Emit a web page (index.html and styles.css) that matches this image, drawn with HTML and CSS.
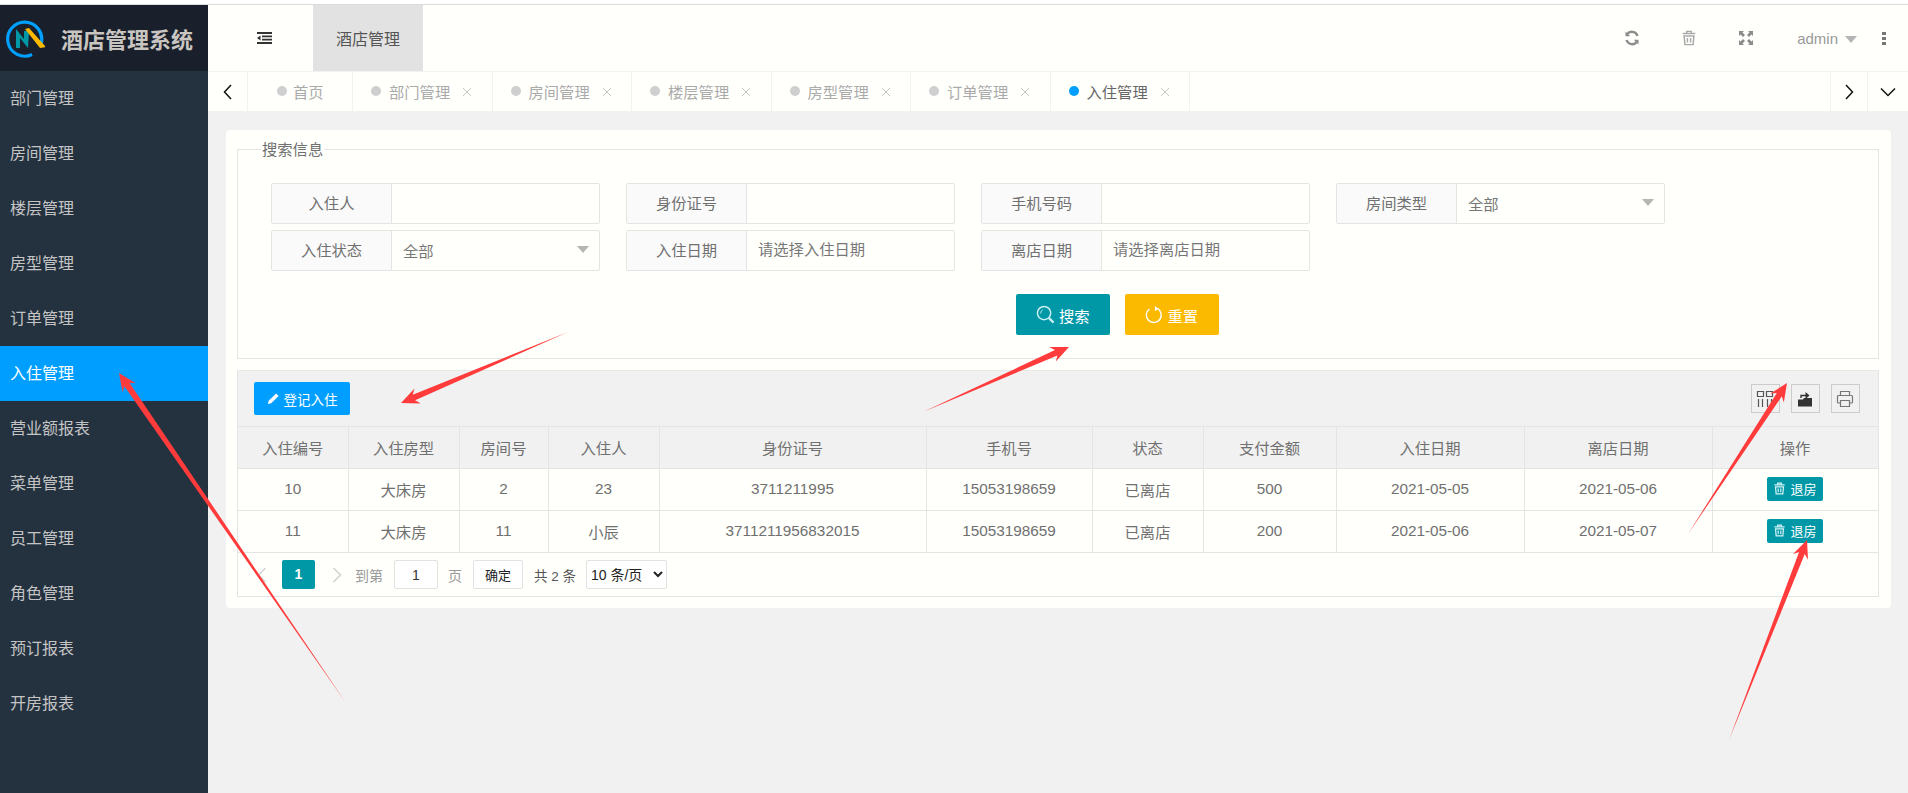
FILE: index.html
```html
<!DOCTYPE html>
<html lang="zh-CN">
<head>
  <meta charset="UTF-8">
  <title>酒店管理系统</title>
  <link rel="stylesheet" href="styles.css">
</head>
<body>
  <svg class="sprite" xmlns="http://www.w3.org/2000/svg">
    <symbol id="i-x" viewBox="0 0 10 10"><path d="M1 1l8 8M9 1l-8 8" fill="none" stroke="currentColor"/></symbol>
    <symbol id="i-trash" viewBox="0 0 14 14"><path d="M5 2.500V1.200h4v1.300M1.500 3h11M2.700 5.200h8.600l-.7 7.600H3.400zM5.600 7v4M8.400 7v4" fill="none" stroke="currentColor" stroke-width="1.300"/></symbol>
  </svg>

  <div class="top-line"></div>
  <div class="app">
    <aside class="sidebar">
      <div class="logo">
        <svg class="logo-mark" viewBox="0 0 40 40">
          <path d="M27 36.500A17 17 0 1 1 36 26" fill="none" stroke="#00a0ff" stroke-width="3.200"/>
          <path d="M11 30V11l8 10V13l5 0-1 17-8-10v10z" fill="#0097a7"/>
          <path d="M20 11l4-1 17 19-6 1z" fill="#fbb900"/>
        </svg>
        <span>酒店管理系统</span>
      </div>
      <ul class="menu">
        <li>部门管理</li>
        <li>房间管理</li>
        <li>楼层管理</li>
        <li>房型管理</li>
        <li>订单管理</li>
        <li class="active">入住管理</li>
        <li>营业额报表</li>
        <li>菜单管理</li>
        <li>员工管理</li>
        <li>角色管理</li>
        <li>预订报表</li>
        <li>开房报表</li>
      </ul>
    </aside>

    <div class="main">
      <header class="topbar">
        <div class="shrink">
          <svg viewBox="0 0 15 12" width="15" height="12"><path d="M0 1h15M5 4.300h10M5 7.700h10M0 11h15" fill="none" stroke="#333" stroke-width="1.800"/><path d="M3.500 3.500v5L0 6z" fill="#333"/></svg>
        </div>
        <div class="top-tab">酒店管理</div>
        <div class="top-right">
          <svg class="top-icon" viewBox="0 0 16 16"><path d="M13.500 6A6 6 0 0 0 3 4.200M2.500 10A6 6 0 0 0 13 11.800" fill="none" stroke="#8c8c8c" stroke-width="2.400"/><path d="M1.500 1.500v4.700h4.700zM14.500 14.500V9.800H9.800z" fill="#8c8c8c"/></svg>
          <svg class="top-icon trash"><use href="#i-trash"/></svg>
          <svg class="top-icon" viewBox="0 0 16 16"><path d="M1 1h5L4.500 2.500 7 5 5 7 2.500 4.500 1 6zM15 1v5l-1.500-1.500L11 7 9 5l2.500-2.500L10 1zM1 15v-5l1.500 1.500L5 9l2 2-2.500 2.500L6 15zM15 15h-5l1.500-1.500L9 11l2-2 2.500 2.500L15 10z" fill="#8c8c8c"/></svg>
          <span class="admin">admin<i class="caret"></i></span>
          <span class="dots"><i></i><i></i><i></i></span>
        </div>
      </header>

      <nav class="tabs">
        <div class="tab-btn">
          <svg viewBox="0 0 10 16" width="10" height="16"><path d="M8 1L1.500 8 8 15" fill="none" stroke="#111" stroke-width="1.500"/></svg>
        </div>
        <div class="tab home"><i class="dot"></i>首页</div>
        <div class="tab"><i class="dot"></i>部门管理<svg class="tab-x"><use href="#i-x"/></svg></div>
        <div class="tab"><i class="dot"></i>房间管理<svg class="tab-x"><use href="#i-x"/></svg></div>
        <div class="tab"><i class="dot"></i>楼层管理<svg class="tab-x"><use href="#i-x"/></svg></div>
        <div class="tab"><i class="dot"></i>房型管理<svg class="tab-x"><use href="#i-x"/></svg></div>
        <div class="tab"><i class="dot"></i>订单管理<svg class="tab-x"><use href="#i-x"/></svg></div>
        <div class="tab current"><i class="dot"></i>入住管理<svg class="tab-x"><use href="#i-x"/></svg></div>
        <div class="tab-btn right">
          <svg viewBox="0 0 10 16" width="10" height="16"><path d="M2 1l6.500 7L2 15" fill="none" stroke="#111" stroke-width="1.500"/></svg>
        </div>
        <div class="tab-btn down">
          <svg viewBox="0 0 16 10" width="16" height="10"><path d="M1 1.500L8 8.500l7-7" fill="none" stroke="#111" stroke-width="1.500"/></svg>
        </div>
      </nav>

      <div class="content">
        <div class="card">
          <fieldset class="search">
            <legend>搜索信息</legend>
            <div class="form-grid">
              <div class="field"><label>入住人</label><input type="text"></div>
              <div class="field"><label>身份证号</label><input type="text"></div>
              <div class="field"><label>手机号码</label><input type="text"></div>
              <div class="field"><label>房间类型</label><div class="fake-select">全部<i class="caret"></i></div></div>
              <div class="field"><label>入住状态</label><div class="fake-select">全部<i class="caret"></i></div></div>
              <div class="field"><label>入住日期</label><input type="text" placeholder="请选择入住日期"></div>
              <div class="field"><label>离店日期</label><input type="text" placeholder="请选择离店日期"></div>
            </div>
            <div class="search-btns">
              <button class="btn teal">
                <svg viewBox="0 0 20 20" width="19" height="19"><circle cx="8.500" cy="8.500" r="7" fill="none" stroke="#c8f0f2" stroke-width="1.500"/><path d="M13.500 13.500l5 5" stroke="#c8f0f2" stroke-width="2.400"/><path d="M5 9c0-2 .8-3.200 2-4" fill="none" stroke="#c8f0f2"/></svg>搜索
              </button>
              <button class="btn yellow">
                <svg viewBox="0 0 20 20" width="18" height="18"><path d="M13.500 2.700A8.300 8.300 0 1 1 5 3.300" fill="none" stroke="#fff" stroke-width="1.600"/><path d="M11 0l4 3-4 2.500z" fill="#fff"/></svg>重置
              </button>
            </div>
          </fieldset>

          <div class="table-box">
            <div class="toolbar">
              <button class="add-btn">
                <svg viewBox="0 0 14 14" width="13" height="13"><path d="M1 13l.8-3.500L9.800 1.500l2.700 2.700-8 8z" fill="#fff"/></svg>登记入住
              </button>
              <div class="tools">
                <span class="tool"><svg viewBox="0 0 18 18" width="18" height="18"><path d="M1.500 1.500h6v5h-6zM10.500 1.500h6v5h-6zM2.500 9v8M6.500 9v8M11.500 9v8M15.500 9v8" fill="none" stroke="#555" stroke-width="1.200"/></svg></span>
                <span class="tool"><svg viewBox="0 0 18 18" width="18" height="18"><path d="M2 9.500h5l1-1.500h8v8.500H2z" fill="#333"/><path d="M5 8V5.500h5" fill="none" stroke="#333" stroke-width="1.400"/><path d="M9.500 2l4 3.500-4 3.500z" fill="#333"/></svg></span>
                <span class="tool print"><svg viewBox="0 0 18 18" width="18" height="18"><path d="M4.500 5V1.500h9V5M4.500 13H2.500a1 1 0 0 1-1-1V6.500a1 1 0 0 1 1-1h13a1 1 0 0 1 1 1V12a1 1 0 0 1-1 1h-2M4.500 10.500h9v6h-9z" fill="none" stroke="#777" stroke-width="1.200"/></svg></span>
              </div>
            </div>
            <table class="data">
              <colgroup>
                <col class="c-first"><col class="c-s"><col class="c-room"><col class="c-s">
                <col class="c-id"><col class="c-phone"><col class="c-s"><col class="c-pay">
                <col class="c-date"><col class="c-date"><col>
              </colgroup>
              <thead>
                <tr><th>入住编号</th><th>入住房型</th><th>房间号</th><th>入住人</th><th>身份证号</th><th>手机号</th><th>状态</th><th>支付金额</th><th>入住日期</th><th>离店日期</th><th>操作</th></tr>
              </thead>
              <tbody>
                <tr>
                  <td>10</td><td>大床房</td><td>2</td><td>23</td><td>3711211995</td><td>15053198659</td><td>已离店</td><td>500</td><td>2021-05-05</td><td>2021-05-06</td>
                  <td><button class="out-btn"><svg><use href="#i-trash"/></svg>退房</button></td>
                </tr>
                <tr>
                  <td>11</td><td>大床房</td><td>11</td><td>小辰</td><td>3711211956832015</td><td>15053198659</td><td>已离店</td><td>200</td><td>2021-05-06</td><td>2021-05-07</td>
                  <td><button class="out-btn"><svg><use href="#i-trash"/></svg>退房</button></td>
                </tr>
              </tbody>
            </table>
            <div class="pager">
              <svg class="chev" viewBox="0 0 10 16" width="10" height="16"><path d="M8.500 1L1.500 8l7 7" fill="none" stroke="#d2d2d2" stroke-width="1.500"/></svg>
              <span class="page-no">1</span>
              <svg class="chev" viewBox="0 0 10 16" width="10" height="16"><path d="M1.500 1l7 7-7 7" fill="none" stroke="#d2d2d2" stroke-width="1.500"/></svg>
              <span class="muted goto">到第</span>
              <input class="page-input" type="text" value="1">
              <span class="muted">页</span>
              <button class="ok-btn">确定</button>
              <span class="total">共 2 条</span>
              <select class="size"><option>10 条/页</option></select>
            </div>
          </div>
        </div>
      </div>
    </div>
  </div>

  <!-- 红色标注箭头 -->
  <svg class="arrows" viewBox="0 0 1908 793">
    <polygon points="346,703 129.400,382.800 135.800,383.300 119,373 122.600,392.300 124.400,386.200"/>
    <polygon points="568,332 415.100,400.300 420.700,403.400 401,403 414.500,388.600 412.700,394.700"/>
    <polygon points="923,412 1057.400,355.400 1055.800,361.600 1069,347 1049.200,347 1055,350"/>
    <polygon points="1688,534 1781.800,396.300 1783.800,402.400 1787,383 1770.400,393.600 1776.800,393.100"/>
    <polygon points="1729,740 1804.700,554.100 1808,559.700 1807,540 1793,553.900 1799.100,551.900"/>
  </svg>
</body>
</html>
```

FILE: styles.css
```css
* {
    box-sizing: border-box;
}
html, body {
    height: 100%;
}
body {
    margin: 0;
    background: #f1f1f1;
    font-family: "Liberation Sans", "Noto Sans CJK SC", sans-serif;
    font-size: 15.300px;
    color: #707070;
    overflow: hidden;
    position: relative;
    display: flex;
    flex-direction: column;
}
.sprite {
    display: none;
}
.top-line {
    height: 5px;
    flex: none;
    background: #fff;
    border-bottom: 1px solid #dcdcdc;
}
.app {
    flex: 1;
    display: flex;
    min-height: 0;
}

/* sidebar */
.sidebar {
    width: 208px;
    flex: none;
    background: #243240;
}
.logo {
    height: 66px;
    background: #19202c;
    display: flex;
    align-items: center;
    padding-left: 5px;
    gap: 16px;
    color: #c9c5c0;
    font-size: 22px;
    font-weight: bold;
}
.logo-mark {
    width: 40px;
    height: 40px;
}
.menu {
    list-style: none;
    margin: 0;
    padding: 0;
}
.menu li {
    height: 55px;
    line-height: 55px;
    padding-left: 10px;
    font-size: 16px;
    color: #c4c4c4;
}
.menu li.active {
    background: #009fff;
    color: #fff;
}

/* top bar */
.main {
    flex: 1;
    min-width: 0;
    display: flex;
    flex-direction: column;
}
.topbar {
    height: 66px;
    flex: none;
    background: #fffffc;
    display: flex;
    align-items: stretch;
}
.shrink {
    width: 105px;
    display: flex;
    align-items: center;
    justify-content: center;
    padding-left: 7px;
}
.top-tab {
    width: 110px;
    background: #e2e2e2;
    color: #555;
    font-size: 16px;
    display: flex;
    align-items: center;
    justify-content: center;
}
.top-right {
    margin-left: auto;
    display: flex;
    align-items: center;
    padding-right: 22px;
    color: #999;
    font-size: 15px;
}
.top-icon {
    width: 16px;
    height: 16px;
    margin-right: 41px;
}
.top-icon.trash {
    color: #aaa;
}
.admin {
    display: flex;
    align-items: center;
    margin-right: 25px;
    margin-left: 2px;
}
.admin .caret {
    margin-left: 7px;
    margin-top: 3px;
}
.caret {
    width: 0;
    height: 0;
    border-left: 6px solid transparent;
    border-right: 6px solid transparent;
    border-top: 7px solid #b5b5b5;
}
.dots {
    display: flex;
    flex-direction: column;
    gap: 2px;
}
.dots i {
    width: 4px;
    height: 3px;
    background: #777;
}

/* tabs */
.tabs {
    height: 40px;
    flex: none;
    background: #fffffc;
    border-top: 1px solid #f2f2f0;
    display: flex;
    color: #aaa;
}
.tab-btn {
    width: 40px;
    display: flex;
    align-items: center;
    justify-content: center;
    border-right: 1px solid #f2f2f0;
}
.tab-btn.right {
    margin-left: auto;
    width: 38px;
    border-left: 1px solid #f2f2f0;
    border-right: 1px solid #f2f2f0;
}
.tab-btn.down {
    border-right: none;
}
.tab {
    width: 139.500px;
    padding: 0 0 2px 18px;
    display: flex;
    align-items: center;
    border-right: 1px solid #f2f2f0;
}
.tab.home {
    width: 105px;
    padding-left: 29px;
}
.dot {
    width: 10px;
    height: 10px;
    border-radius: 50%;
    background: #cfcfcf;
    margin-right: 8px;
}
.tab.home .dot {
    margin-right: 6px;
}
.tab-x {
    width: 10px;
    height: 10px;
    margin-left: 12px;
    margin-top: 2px;
    color: #c8c8c8;
}
.tab.current {
    color: #666;
}
.tab.current .dot {
    background: #009fff;
}

/* content */
.content {
    flex: 1;
    padding: 19px 17.500px 0 18px;
}
.card {
    background: #fffffc;
    border-radius: 4px;
    padding: 12px 12px 11px 11px;
}
.search {
    margin: 0;
    padding: 0 32px 0 33px;
    border: 1px solid #e4e4e2;
    height: 217px;
    min-width: 0;
}
.search legend {
    margin-left: -10px;
    padding: 0 1px;
    line-height: 1;
}
.form-grid {
    display: grid;
    grid-template-columns: repeat(4, 329px);
    column-gap: 26px;
    row-gap: 6px;
    margin-top: 26px;
}
.field {
    display: flex;
    height: 41px;
    border: 1px solid #e4e4e2;
    border-radius: 2px;
}
.field label {
    width: 120px;
    flex: none;
    background: #fafafa;
    border-right: 1px solid #e4e4e2;
    display: flex;
    align-items: center;
    justify-content: center;
    padding-bottom: 3px;
}
.field input, .fake-select {
    flex: 1;
    min-width: 0;
    border: none;
    background: none;
    padding: 0 11px 2px;
    font: inherit;
    color: #777;
    outline: none;
}
.field input::placeholder {
    color: #777;
    opacity: 1;
}
.fake-select {
    display: flex;
    align-items: center;
    justify-content: space-between;
    padding-right: 10px;
}
.search-btns {
    display: flex;
    justify-content: center;
    gap: 15px;
    margin-top: 23px;
    padding: 0 2px 0 120px;
}
.btn {
    width: 94px;
    height: 41px;
    border: none;
    border-radius: 2px;
    color: #fff;
    font: inherit;
    display: flex;
    align-items: center;
    justify-content: center;
    gap: 4px;
}
.btn.teal {
    background: #0097a7;
}
.btn.yellow {
    background: #fbb900;
}

/* table */
.table-box {
    margin-top: 11px;
    border: 1px solid #e4e4e2;
    border-top-color: #e8e8e8;
}
.toolbar {
    height: 55px;
    background: #f1f1f1;
    display: flex;
    align-items: center;
    justify-content: space-between;
    padding: 0 18px 0 16px;
}
.add-btn {
    width: 96px;
    height: 33px;
    background: #009fff;
    border: none;
    border-radius: 2px;
    color: #fff;
    font: 13.500px "Liberation Sans", "Noto Sans CJK SC", sans-serif;
    display: flex;
    align-items: center;
    justify-content: center;
    gap: 4px;
}
.tools {
    display: flex;
    gap: 11px;
}
.tool {
    width: 29px;
    height: 29px;
    border: 1px solid #ccc;
    display: flex;
    align-items: center;
    justify-content: center;
}
.data {
    width: 100%;
    border-collapse: collapse;
    table-layout: fixed;
    text-align: center;
}
.c-first {
    width: 110px;
}
.c-s {
    width: 111px;
}
.c-room {
    width: 89px;
}
.c-id {
    width: 267px;
}
.c-phone {
    width: 166px;
}
.c-pay {
    width: 133px;
}
.c-date {
    width: 188px;
}
.data th, .data td {
    height: 42px;
    padding: 0 0 2px;
    border: 1px solid #e4e4e2;
    font-weight: normal;
}
.data tr > :first-child {
    border-left: none;
}
.data tr > :last-child {
    border-right: none;
}
.data th {
    background: #f1f1f1;
}
.out-btn {
    width: 56px;
    height: 24px;
    margin: 0 auto;
    padding: 0;
    background: #0097a7;
    border: none;
    border-radius: 2px;
    color: #fff;
    font: 13px "Liberation Sans", "Noto Sans CJK SC", sans-serif;
    display: flex;
    align-items: center;
    justify-content: center;
    gap: 4px;
}
.out-btn svg {
    width: 13px;
    height: 13px;
    color: #d4f3f5;
}

/* pager */
.pager {
    height: 43px;
    display: flex;
    align-items: center;
    padding-left: 19px;
    font-size: 14px;
}
.page-no {
    width: 33px;
    height: 29px;
    margin: 0 17px 0 15px;
    background: #0097a7;
    border-radius: 2px;
    color: #fff;
    font-weight: bold;
    text-align: center;
    line-height: 29px;
}
.muted {
    color: #999;
}
.goto {
    margin-left: 13px;
}
.page-input {
    width: 44px;
    height: 29px;
    margin: 0 10px 0 11px;
    border: 1px solid #e2e2e2;
    border-radius: 2px;
    text-align: center;
    font: inherit;
    color: #333;
    background: #fff;
}
.ok-btn {
    width: 50px;
    height: 29px;
    margin: 0 11px;
    padding: 0;
    border: 1px solid #e2e2e2;
    border-radius: 2px;
    background: #fff;
    color: #222;
    font: 13px "Liberation Sans", "Noto Sans CJK SC", sans-serif;
}
.total {
    margin-right: 10px;
    color: #555;
    font-size: 13.500px;
}
.size {
    width: 81px;
    height: 29px;
    border: 1px solid #e2e2e2;
    border-radius: 2px;
    background: #fff;
    color: #222;
    font: 14px "Liberation Sans", "Noto Sans CJK SC", sans-serif;
}

/* annotations */
.arrows {
    position: absolute;
    left: 0;
    top: 0;
    width: 1908px;
    height: 793px;
    pointer-events: none;
}
.arrows polygon {
    fill: #ff3b3b;
}
```
